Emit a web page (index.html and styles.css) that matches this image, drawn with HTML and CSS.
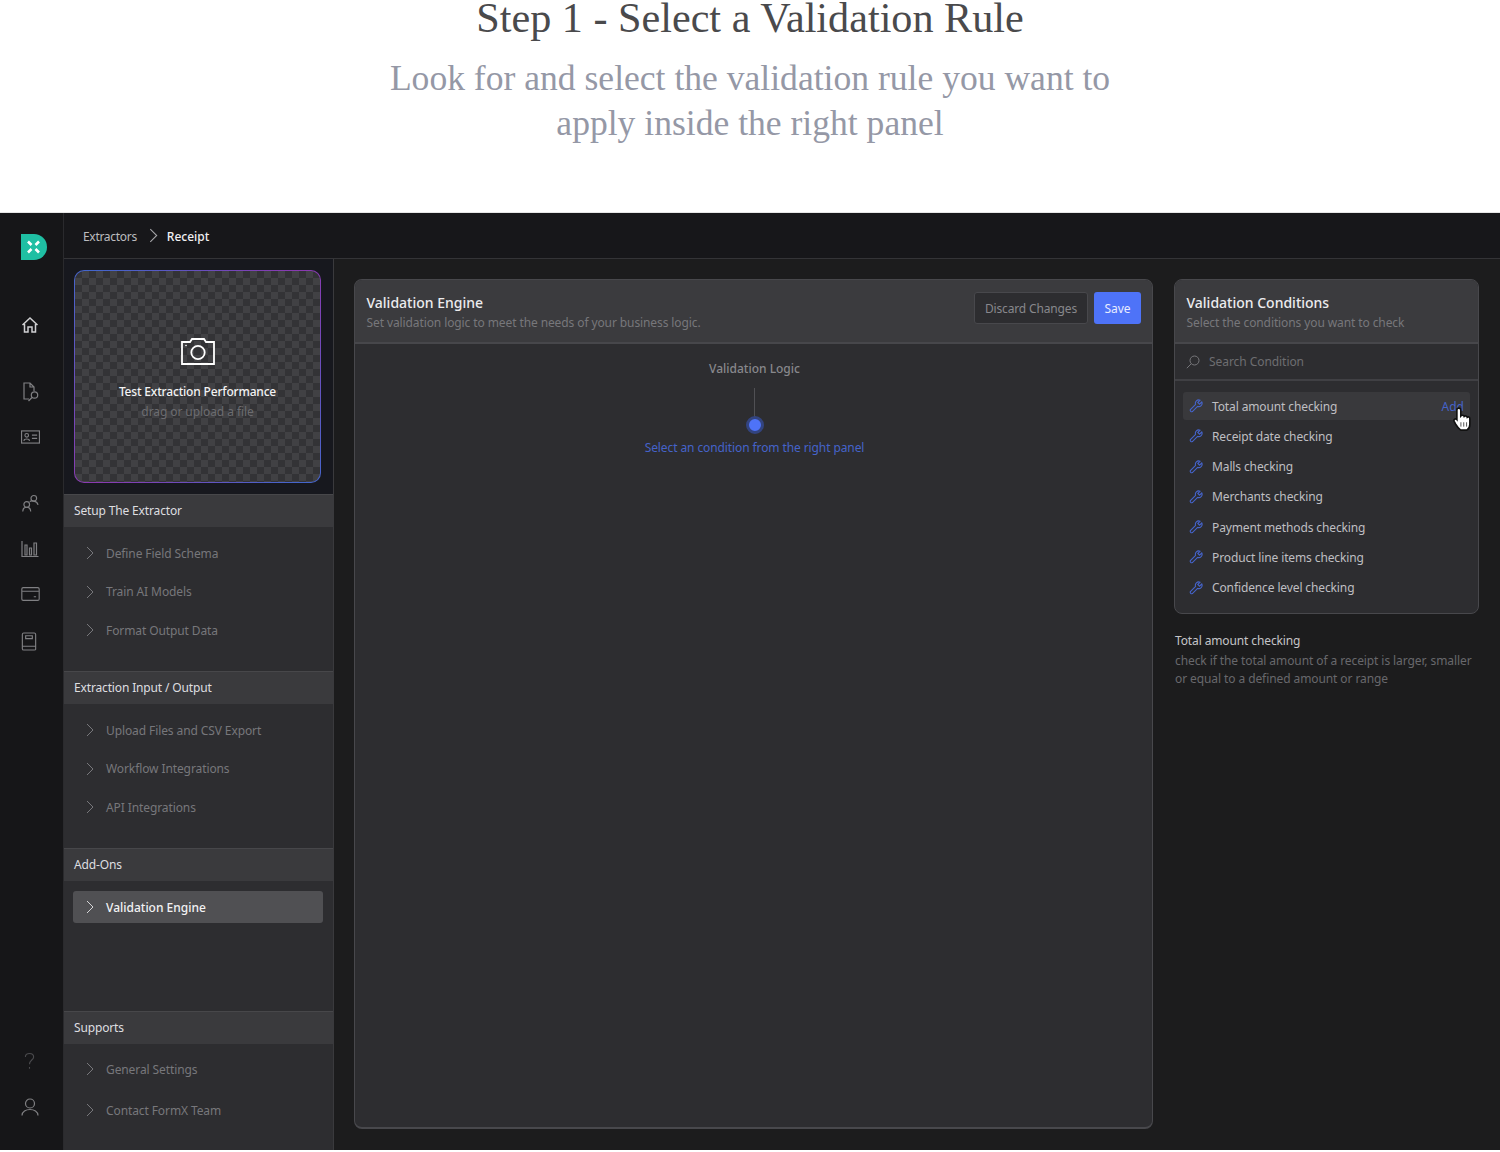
FILE: index.html
```html
<!DOCTYPE html>
<html lang="en">
<head>
<meta charset="utf-8">
<title>Step 1 - Select a Validation Rule</title>
<link rel="stylesheet" href="styles.css">
</head>
<body>
<header class="hero">
  <h1 class="hero-title">Step 1 - Select a Validation Rule</h1>
  <p class="hero-sub">Look for and select the validation rule you want to<br>apply inside the right panel</p>
</header>
<div class="app">
  <nav class="rail">
    <svg class="logo" viewBox="0 0 26 26"><path d="M0 0H13A13 13 0 0 1 13 26H0Z" fill="#1fbfa3"/><path d="M7 7.500L10.500 11M18 7.500L14.500 11M7 18.500L10.500 15M18 18.500L14.500 15" stroke="#fff" stroke-width="2.600" fill="none"/></svg>
    <svg class="ri r-home" viewBox="0 0 18 18"><path d="M1.500 9L9 2l7.500 7M3.500 8v8h3.500v-5h4v5h3.500V8" class="st bright"/></svg>
    <svg class="ri r-doc" viewBox="0 0 18 20"><path d="M7 17H2V1h6l4 4v4M8 1v4h4" class="st"/><circle cx="12.500" cy="13" r="3.200" class="st"/><path d="M10 15.500l-3.500 3.500" class="st"/></svg>
    <svg class="ri r-card" viewBox="0 0 20 14"><rect x=".6" y=".6" width="18.800" height="12.800" class="st"/><circle cx="6" cy="5.200" r="1.900" class="st"/><path d="M3 11c.4-2.500 5.600-2.500 6 0M11.500 5h5.500M11.500 8.500h5.500" class="st"/></svg>
    <svg class="ri r-team" viewBox="0 0 18 20"><circle cx="12.500" cy="4" r="3" class="st"/><circle cx="5" cy="10.500" r="3" class="st"/><path d="M.8 18c0-6 8.400-6 8.400 0M8.200 7.500c1-1 2.500-1 4.300-.5 2.500.4 4 2 4.500 4" class="st"/></svg>
    <svg class="ri r-chart" viewBox="0 0 18 18"><path d="M1 1v15.500h16.500M4 15V5h2v10zM8.500 15V8h2v7zM13 15V3h2.500v12z" class="st"/></svg>
    <svg class="ri r-wallet" viewBox="0 0 20 15"><rect x=".7" y=".7" width="18.600" height="13.600" rx="1.500" class="st"/><path d="M1 4.500h18M13.500 10.500h2.500" class="st"/></svg>
    <svg class="ri r-book" viewBox="0 0 16 20"><path d="M1 15V2.500Q1 1 2.500 1h11Q15 1 15 2.500v16Q15 19 13.500 19h-11Q1 19 1 17.500V15h14M4.500 4h7v3h-7z" class="st"/></svg>
    <div class="rail-spacer"></div>
    <svg class="ri r-help" viewBox="0 0 12 20"><path d="M1.500 5.500C1.500 .5 10.500 .5 10.500 5.500c0 3.500-4.500 3.500-4.500 8M6 16.500v2" class="st dim"/></svg>
    <svg class="ri r-user" viewBox="0 0 18 18"><circle cx="9" cy="5.500" r="4.500" class="st"/><path d="M1 17.500c0-8 16-8 16 0" class="st"/></svg>
  </nav>
  <div class="shell">
    <div class="topbar">
      <span class="crumb">Extractors</span>
      <svg class="crumb-sep" viewBox="0 0 8 14"><path d="M1 1l6 6-6 6" fill="none" stroke="#a5a5a8" stroke-width="1"/></svg>
      <span class="crumb crumb-on">Receipt</span>
    </div>
    <div class="work">
      <aside class="side">
        <div class="upload-wrap">
          <div class="upload">
            <svg class="camera" viewBox="0 0 34 27"><path d="M1 26V4h8l2-3h12l2 3h8v22z" fill="none" stroke="#fff" stroke-width="1.800"/><circle cx="17" cy="14.500" r="6.700" fill="none" stroke="#fff" stroke-width="1.800"/><circle cx="5" cy="7.500" r=".8" fill="#fff"/></svg>
            <div class="upload-title">Test Extraction Performance</div>
            <div class="upload-sub">drag or upload a file</div>
          </div>
        </div>
        <section class="group g-setup">
          <h2 class="group-head">Setup The Extractor</h2>
          <div class="group-items">
            <a class="item"><svg class="chev" viewBox="0 0 8 14"><path d="M1 1l6 6-6 6"/></svg>Define Field Schema</a>
            <a class="item"><svg class="chev" viewBox="0 0 8 14"><path d="M1 1l6 6-6 6"/></svg>Train AI Models</a>
            <a class="item"><svg class="chev" viewBox="0 0 8 14"><path d="M1 1l6 6-6 6"/></svg>Format Output Data</a>
          </div>
        </section>
        <section class="group g-io">
          <h2 class="group-head">Extraction Input / Output</h2>
          <div class="group-items">
            <a class="item"><svg class="chev" viewBox="0 0 8 14"><path d="M1 1l6 6-6 6"/></svg>Upload Files and CSV Export</a>
            <a class="item"><svg class="chev" viewBox="0 0 8 14"><path d="M1 1l6 6-6 6"/></svg>Workflow Integrations</a>
            <a class="item"><svg class="chev" viewBox="0 0 8 14"><path d="M1 1l6 6-6 6"/></svg>API Integrations</a>
          </div>
        </section>
        <section class="group g-addons">
          <h2 class="group-head">Add-Ons</h2>
          <div class="group-items">
            <a class="item item-on"><svg class="chev" viewBox="0 0 8 14"><path d="M1 1l6 6-6 6"/></svg>Validation Engine</a>
          </div>
        </section>
        <section class="group g-support">
          <h2 class="group-head">Supports</h2>
          <div class="group-items support-items">
            <a class="item"><svg class="chev" viewBox="0 0 8 14"><path d="M1 1l6 6-6 6"/></svg>General Settings</a>
            <a class="item"><svg class="chev" viewBox="0 0 8 14"><path d="M1 1l6 6-6 6"/></svg>Contact FormX Team</a>
          </div>
        </section>
      </aside>
      <main class="stage">
        <section class="panel engine">
          <div class="panel-head">
            <div class="panel-titles">
              <h2 class="panel-title">Validation Engine</h2>
              <p class="panel-sub">Set validation logic to meet the needs of your business logic.</p>
            </div>
            <button class="btn btn-ghost">Discard Changes</button>
            <button class="btn btn-primary">Save</button>
          </div>
          <div class="logic">
            <div class="logic-title">Validation Logic</div>
            <div class="logic-line"></div>
            <div class="logic-dot"></div>
            <div class="logic-hint">Select an condition from the right panel</div>
          </div>
        </section>
        <div class="right">
          <section class="panel conditions">
            <div class="panel-head">
              <div class="panel-titles">
                <h2 class="panel-title">Validation Conditions</h2>
                <p class="panel-sub">Select the conditions you want to check</p>
              </div>
            </div>
            <div class="search">
              <svg class="search-ic" viewBox="0 0 14 14"><circle cx="8.500" cy="5.500" r="4.500" fill="none" stroke="#77777b" stroke-width="1"/><path d="M5.300 8.700L.8 13.200" stroke="#77777b" stroke-width="1"/></svg>
              <span>Search Condition</span>
            </div>
            <ul class="rules">
              <li class="rule rule-on"><svg class="wrench" viewBox="0 0 14 14"><path d="M12.800 3L10.500 5.200 8.800 3.500 11 1.200A3.300 3.300 0 0 0 6.600 5.400L1.400 10.600A1.500 1.500 0 0 0 3.400 12.600L8.600 7.400A3.300 3.300 0 0 0 12.800 3Z"/></svg>Total amount checking<span class="rule-add">Add</span><svg class="hand" viewBox="0 0 16 22"><path d="M5 1c1.200 0 1.900.8 1.900 1.800v5.400c.8-1 2.700-.8 3.100.4.800-.8 2.500-.5 2.800.8.800-.6 2.400-.2 2.400 1.300V16c0 2.500-1.300 4.300-2.800 5.200H6.800C5 20 3.500 18 2.200 15.800L.8 13.200c-.8-1.700 1.200-3 2.400-1.700l.1.100V2.800C3.300 1.800 4 1 5 1Z" fill="#fff" stroke="#111" stroke-width="1.500"/><path d="M7 14v4M9.600 14v4M12.200 14v4" stroke="#555" stroke-width=".9"/></svg></li>
              <li class="rule"><svg class="wrench" viewBox="0 0 14 14"><path d="M12.800 3L10.500 5.200 8.800 3.500 11 1.200A3.300 3.300 0 0 0 6.600 5.400L1.400 10.600A1.500 1.500 0 0 0 3.400 12.600L8.600 7.400A3.300 3.300 0 0 0 12.800 3Z"/></svg>Receipt date checking</li>
              <li class="rule"><svg class="wrench" viewBox="0 0 14 14"><path d="M12.800 3L10.500 5.200 8.800 3.500 11 1.200A3.300 3.300 0 0 0 6.600 5.400L1.400 10.600A1.500 1.500 0 0 0 3.400 12.600L8.600 7.400A3.300 3.300 0 0 0 12.800 3Z"/></svg>Malls checking</li>
              <li class="rule"><svg class="wrench" viewBox="0 0 14 14"><path d="M12.800 3L10.500 5.200 8.800 3.500 11 1.200A3.300 3.300 0 0 0 6.600 5.400L1.400 10.600A1.500 1.500 0 0 0 3.400 12.600L8.600 7.400A3.300 3.300 0 0 0 12.800 3Z"/></svg>Merchants checking</li>
              <li class="rule"><svg class="wrench" viewBox="0 0 14 14"><path d="M12.800 3L10.500 5.200 8.800 3.500 11 1.200A3.300 3.300 0 0 0 6.600 5.400L1.400 10.600A1.500 1.500 0 0 0 3.400 12.600L8.600 7.400A3.300 3.300 0 0 0 12.800 3Z"/></svg>Payment methods checking</li>
              <li class="rule"><svg class="wrench" viewBox="0 0 14 14"><path d="M12.800 3L10.500 5.200 8.800 3.500 11 1.200A3.300 3.300 0 0 0 6.600 5.400L1.400 10.600A1.500 1.500 0 0 0 3.400 12.600L8.600 7.400A3.300 3.300 0 0 0 12.800 3Z"/></svg>Product line items checking</li>
              <li class="rule"><svg class="wrench" viewBox="0 0 14 14"><path d="M12.800 3L10.500 5.200 8.800 3.500 11 1.200A3.300 3.300 0 0 0 6.600 5.400L1.400 10.600A1.500 1.500 0 0 0 3.400 12.600L8.600 7.400A3.300 3.300 0 0 0 12.800 3Z"/></svg>Confidence level checking</li>
            </ul>
          </section>
          <div class="detail">
            <div class="detail-title">Total amount checking</div>
            <p class="detail-text">check if the total amount of a receipt is larger, smaller or equal to a defined amount or range</p>
          </div>
        </div>
      </main>
    </div>
  </div>
</div>
</body>
</html>
```
FILE: styles.css
```css
* { box-sizing: border-box; }
html, body { margin: 0; padding: 0; }
body { width: 1500px; height: 1152px; overflow: hidden; background: #fff; font-family: "Noto Sans", "Open Sans", sans-serif; }

.hero { height: 213px; text-align: center; font-family: "Liberation Serif", serif; border-bottom: 1px solid #e6e6e6; }
.hero-title { margin: 0; font-size: 42.200px; line-height: 36px; font-weight: 400; color: #4a4a4c; }
.hero-sub { margin: 20px 0 0; font-size: 35.600px; line-height: 45px; color: #9598a6; }

.app { height: 937px; display: flex; background: #1c1c1d; }

.rail { width: 64px; flex: none; background: #161618; border-right: 1px solid #2a2a2d; display: flex; flex-direction: column; align-items: flex-start; padding-left: 21px; }
.logo { width: 26px; height: 26px; margin-top: 21px; }
.ri { display: block; flex: none; }
.st { fill: none; stroke: #808083; stroke-width: 1.200; }
.bright { stroke: #d0d0d2; stroke-width: 1.500; }
.dim { stroke: #4b4b4e; }
.r-home { width: 18px; height: 18px; margin-top: 56px; }
.r-doc { width: 18px; height: 20px; margin-top: 48px; margin-left: 1px; }
.r-card { width: 19px; height: 14px; margin-top: 28px; }
.r-team { width: 17px; height: 20px; margin-top: 50px; margin-left: 1px; }
.r-chart { width: 18px; height: 18px; margin-top: 26px; }
.r-wallet { width: 19px; height: 14px; margin-top: 29px; }
.r-book { width: 16px; height: 19px; margin-top: 31px; }
.rail-spacer { flex: 1; }
.r-help { width: 11px; height: 20px; margin-left: 3px; }
.r-user { width: 18px; height: 18px; margin-top: 27px; margin-bottom: 34px; }

.shell { flex: 1; min-width: 0; display: flex; flex-direction: column; }
.topbar { height: 46px; flex: none; background: #17171a; border-bottom: 1px solid #343437; display: flex; align-items: center; padding: 1px 0 0 19px; font-size: 12px; }
.crumb { color: #bcbcbf; letter-spacing: -.3px; }
.crumb-on { color: #f0f0f2; font-weight: 500; letter-spacing: 0; }
.crumb-sep { width: 9px; height: 15px; margin: -2px 9px 0 12px; }

.work { flex: 1; min-height: 0; display: flex; }
.side { width: 270px; flex: none; background: #2d2d30; border-right: 1px solid #3a3a3d; display: flex; flex-direction: column; }
.upload-wrap { height: 235px; flex: none; background: #17181e; padding: 11px 12px 0 10px; }
.upload { height: 213px; width: 247px; border: 1.500px solid transparent; border-radius: 10px;
  background:
    repeating-conic-gradient(#414144 0 25%, #333336 0 50%) 0 0 / 14px 14px padding-box,
    conic-gradient(from 45deg, #8a3ab0, #4466cc, #8a3ab0, #4466cc, #8a3ab0) border-box;
  display: flex; flex-direction: column; align-items: center; }
.camera { width: 34px; height: 27px; margin-top: 67px; }
.upload-title { margin-top: 18px; font-size: 12px; line-height: 17px; font-weight: 500; letter-spacing: -.18px; color: #f2f2f3; }
.upload-sub { margin-top: 3px; font-size: 12px; line-height: 17px; letter-spacing: -.08px; color: #6c6c70; }

.group { flex: none; border-top: 1px solid #47474a; }
.g-setup { height: 177px; }
.g-io { height: 177px; }
.g-addons { height: 163px; }
.g-support { flex: 1; }
.group-head { margin: 0; height: 32px; background: #3a3a3d; display: flex; align-items: center; padding: 0 0 1px 10px; font-size: 12px; font-weight: 400; letter-spacing: -.15px; color: #dedee0; }
.group-items { padding: 10px 10px 0 9px; display: flex; flex-direction: column; gap: 6.500px; }
.support-items { padding-top: 9px; gap: 9px; }
.item { height: 32px; display: flex; align-items: center; padding-left: 13px; border-radius: 3px; font-size: 12px; letter-spacing: -.1px; color: #77777b; }
.chev { width: 8px; height: 14px; margin-right: 12px; fill: none; stroke: #77777b; stroke-width: 1; }
.item-on { background: #505053; color: #f2f2f3; font-weight: 500; letter-spacing: 0; }
.item-on .chev { stroke: #d5d5d7; }

.stage { flex: 1; min-width: 0; display: flex; gap: 21px; padding: 20px 21px 21px 20px; align-items: flex-start; }
.panel { border: 1px solid #48484c; border-radius: 8px; background: #2d2d30; overflow: hidden; }
.engine { width: 799px; height: 850px; border-width: 1px 1.500px 2px 1.500px; display: flex; flex-direction: column; }
.conditions { width: 305px; height: 335px; }
.panel-head { height: 64px; flex: none; background: #3b3b3e; border-bottom: 2px solid #47474b; display: flex; align-items: flex-start; padding: 12px 11px 0 11.500px; }
.panel-titles { flex: 1; min-width: 0; margin-top: 1px; }
.panel-title { margin: 0; font-size: 14px; line-height: 20px; font-weight: 500; color: #ececee; }
.panel-sub { margin: 1px 0 0; font-size: 12px; line-height: 17px; letter-spacing: -.1px; color: #77777b; }
.btn { height: 32px; border-radius: 3px; font: inherit; font-size: 12px; padding: 0; }
.btn-ghost { width: 114px; background: #2d2d30; border: 1px solid #48484c; letter-spacing: -.15px; color: #88888c; }
.btn-primary { width: 47px; margin-left: 6px; background: #4e73f8; border: 0; color: #e8ecff; }

.logic { flex: 1; display: flex; flex-direction: column; align-items: center; padding-left: 2px; }
.logic-title { margin-top: 16px; font-size: 12px; line-height: 17px; font-weight: 500; color: #88888c; }
.logic-line { width: 1px; height: 31px; margin-top: 11px; background: #505054; }
.logic-dot { width: 18px; height: 18px; margin-top: -3px; border-radius: 50%; background: #4e73f8; border: 3px solid #33447f; }
.logic-hint { margin-top: 5px; font-size: 12px; line-height: 17px; letter-spacing: -.1px; color: #4563c9; }

.right { width: 305px; flex: none; }
.search { height: 37px; border-bottom: 2px solid #404044; display: flex; align-items: center; padding-left: 11px; font-size: 12px; letter-spacing: -.06px; color: #6d6d71; }
.search-ic { width: 14px; height: 14px; margin-right: 9px; }
.rules { list-style: none; margin: 0; padding: 11px 8px 0 8px; }
.rule { position: relative; height: 28px; margin-bottom: 2.300px; display: flex; align-items: center; padding-left: 6px; border-radius: 3px; font-size: 12px; letter-spacing: -.12px; color: #bfbfc2; }
.rule-on { background: #39393c; }
.wrench { width: 14px; height: 14px; margin-right: 9px; fill: none; stroke: #4563c9; stroke-width: 1.100; }
.rule-add { margin-left: auto; margin-right: 6px; letter-spacing: 0; color: #4563c9; }
.hand { position: absolute; right: -1px; top: 15px; width: 18px; height: 24px; }

.detail { margin-top: 18px; padding-left: 1px; }
.detail-title { font-size: 12px; line-height: 17px; letter-spacing: -.12px; color: #c5c5c8; }
.detail-text { margin: 3px 0 0; font-size: 12px; line-height: 18px; letter-spacing: -.09px; color: #68686c; }
```
